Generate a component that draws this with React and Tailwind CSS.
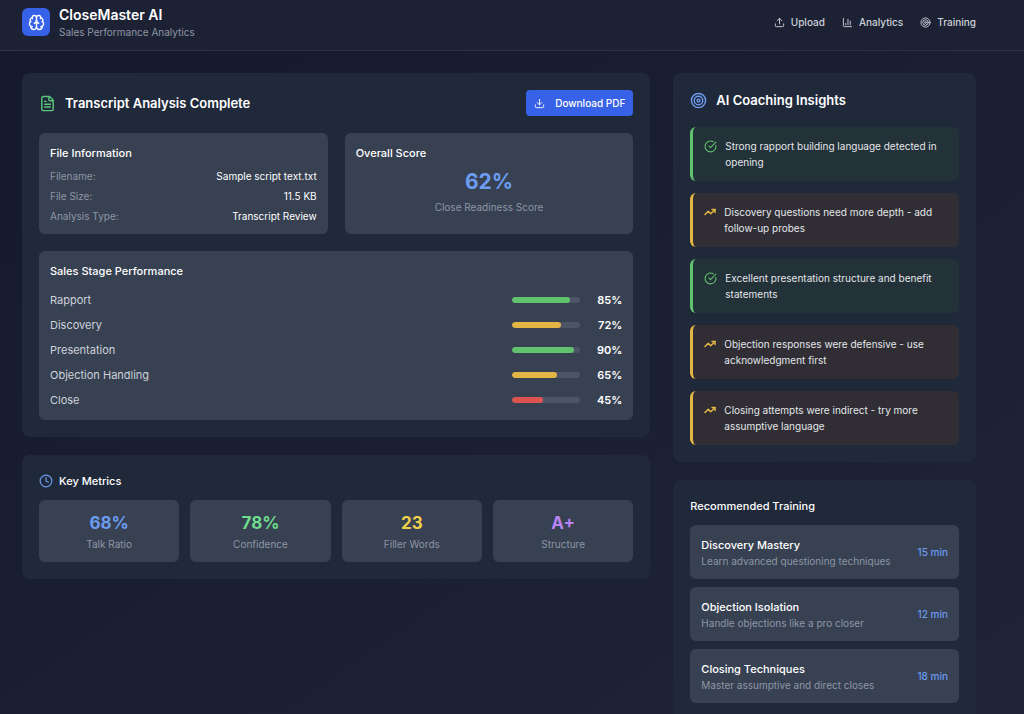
import {
  Brain,
  ChartColumn,
  CircleCheckBig,
  Clock,
  Download,
  FileText,
  Target,
  TrendingUp,
  Upload,
} from 'lucide-react'

const NAV_ITEMS = [
  { label: 'Upload', icon: Upload },
  { label: 'Analytics', icon: ChartColumn },
  { label: 'Training', icon: Target },
]

const FILE_INFO = [
  { label: 'Filename:', value: 'Sample script text.txt' },
  { label: 'File Size:', value: '11.5 KB' },
  { label: 'Analysis Type:', value: 'Transcript Review' },
]

const STAGES = [
  { name: 'Rapport', score: 85 },
  { name: 'Discovery', score: 72 },
  { name: 'Presentation', score: 90 },
  { name: 'Objection Handling', score: 65 },
  { name: 'Close', score: 45 },
]

const METRICS = [
  { value: '68%', label: 'Talk Ratio', color: 'text-[#6c9cf0]' },
  { value: '78%', label: 'Confidence', color: 'text-[#6fdc8c]' },
  { value: '23', label: 'Filler Words', color: 'text-[#f0cf4a]' },
  { value: 'A+', label: 'Structure', color: 'text-[#b584f2]' },
]

const INSIGHTS = [
  { type: 'strength', text: 'Strong rapport building language detected in opening' },
  { type: 'improve', text: 'Discovery questions need more depth - add follow-up probes' },
  { type: 'strength', text: 'Excellent presentation structure and benefit statements' },
  { type: 'improve', text: 'Objection responses were defensive - use acknowledgment first' },
  { type: 'improve', text: 'Closing attempts were indirect - try more assumptive language' },
]

const TRAINING = [
  { title: 'Discovery Mastery', desc: 'Learn advanced questioning techniques', time: '15 min' },
  { title: 'Objection Isolation', desc: 'Handle objections like a pro closer', time: '12 min' },
  { title: 'Closing Techniques', desc: 'Master assumptive and direct closes', time: '18 min' },
]

function barColor(score) {
  if (score >= 80) return 'bg-[#60c26c]'
  if (score >= 60) return 'bg-[#e2b545]'
  return 'bg-[#dc5350]'
}

function Card({ children }) {
  return <section className="rounded-lg bg-[#20293a] p-[17px]">{children}</section>
}

function Header() {
  return (
    <header className="flex items-center justify-between border-b border-[#2b3345] bg-[#1c2234] pt-[5px] pr-12 pb-[11px] pl-[22px]">
      <div className="flex items-center gap-[9px]">
        <div className="flex size-7 items-center justify-center rounded-md bg-[#3761e6]">
          <Brain size={17} className="text-white" />
        </div>
        <div>
          <h1 className="text-[14px] leading-5 font-semibold text-white">CloseMaster AI</h1>
          <p className="text-[10px] leading-[14px] text-[#8e96a5]">Sales Performance Analytics</p>
        </div>
      </div>
      <nav className="flex items-center gap-[17px]">
        {NAV_ITEMS.map(({ label, icon: Icon }) => (
          <a
            key={label}
            href="#"
            className="flex items-center gap-[6px] text-[10px] leading-[14px] font-medium text-[#cdd2da]"
          >
            <Icon size={11} />
            {label}
          </a>
        ))}
      </nav>
    </header>
  )
}

function StageRow({ name, score }) {
  return (
    <li className="flex items-center justify-between leading-[18px]">
      <span className="text-[11px] text-[#cdd2da]">{name}</span>
      <div className="flex items-center gap-[8px]">
        <div className="h-[6px] w-[68px] overflow-hidden rounded-full bg-[#4b5565]">
          <div
            className={`h-full rounded-full ${barColor(score)}`}
            style={{ width: `${score}%` }}
          />
        </div>
        <span className="w-[34px] text-right text-[11px] font-semibold text-white">{score}%</span>
      </div>
    </li>
  )
}

function AnalysisCard() {
  return (
    <Card>
      <div className="mb-[17px] flex items-center justify-between">
        <h2 className="flex items-center gap-[9px] text-[13px] leading-5 font-semibold text-white">
          <FileText size={17} className="text-[#5cc57a]" />
          Transcript Analysis Complete
        </h2>
        <button
          type="button"
          className="flex h-[26px] items-center gap-[10px] rounded bg-[#3761e6] px-[8px] text-[10px] font-medium text-white"
        >
          <Download size={11} />
          Download PDF
        </button>
      </div>

      <div className="mb-[17px] grid grid-cols-2 gap-[17px]">
        <div className="rounded-md bg-[#374152] p-[11px]">
          <h3 className="mb-[7px] text-[11px] leading-[18px] font-medium text-white">
            File Information
          </h3>
          <dl className="flex flex-col gap-[6px] text-[10px] leading-[14px]">
            {FILE_INFO.map((row) => (
              <div key={row.label} className="flex justify-between">
                <dt className="text-[#8e96a5]">{row.label}</dt>
                <dd className="text-white">{row.value}</dd>
              </div>
            ))}
          </dl>
        </div>
        <div className="rounded-md bg-[#374152] p-[11px]">
          <h3 className="mb-[7px] text-[11px] leading-[18px] font-medium text-white">
            Overall Score
          </h3>
          <div className="text-center">
            <div className="mb-[5px] text-[21px] leading-[26px] font-bold text-[#6c9cf0]">62%</div>
            <div className="text-[10px] leading-[14px] text-[#8e96a5]">Close Readiness Score</div>
          </div>
        </div>
      </div>

      <div className="rounded-md bg-[#374152] p-[11px]">
        <h3 className="mb-[11px] text-[11px] leading-[18px] font-medium text-white">
          Sales Stage Performance
        </h3>
        <ul className="flex flex-col gap-[7px]">
          {STAGES.map((stage) => (
            <StageRow key={stage.name} {...stage} />
          ))}
        </ul>
      </div>
    </Card>
  )
}

function MetricsCard() {
  return (
    <Card>
      <h3 className="mb-[10px] flex items-center gap-[6px] text-[11px] leading-[18px] font-medium text-white">
        <Clock size={14} className="text-[#6c9cf0]" />
        Key Metrics
      </h3>
      <div className="grid grid-cols-4 gap-[11px]">
        {METRICS.map((metric) => (
          <div key={metric.label} className="rounded-md bg-[#374152] p-[11px] text-center">
            <div className={`mb-[2px] text-[17px] leading-6 font-bold ${metric.color}`}>
              {metric.value}
            </div>
            <div className="text-[10px] leading-[14px] text-[#8e96a5]">{metric.label}</div>
          </div>
        ))}
      </div>
    </Card>
  )
}

function Insight({ type, text }) {
  const isStrength = type === 'strength'

  return (
    <li
      className={`flex items-start gap-[8px] rounded-md border-l-[3px] p-[11px] ${
        isStrength ? 'border-[#60c26c] bg-[#233138]' : 'border-[#e2b545] bg-[#302e34]'
      }`}
    >
      {isStrength ? (
        <CircleCheckBig size={13} className="mt-[2px] shrink-0 text-[#60c26c]" />
      ) : (
        <TrendingUp size={12} strokeWidth={3} className="mt-[2px] shrink-0 text-[#e2b545]" />
      )}
      <p className="text-[10px] leading-4 text-[#e3e6ea]">{text}</p>
    </li>
  )
}

function InsightsCard() {
  return (
    <Card>
      <h2 className="mb-[17px] flex items-center gap-[9px] text-[13px] leading-5 font-semibold text-white">
        <Target size={17} className="text-[#6c9cf0]" />
        AI Coaching Insights
      </h2>
      <ul className="flex flex-col gap-[12px]">
        {INSIGHTS.map((insight) => (
          <Insight key={insight.text} {...insight} />
        ))}
      </ul>
    </Card>
  )
}

function TrainingCard() {
  return (
    <Card>
      <h3 className="mb-[10px] text-[11px] leading-[18px] font-medium text-white">
        Recommended Training
      </h3>
      <ul className="flex flex-col gap-[8px]">
        {TRAINING.map((item) => (
          <li
            key={item.title}
            className="flex items-center justify-between rounded-md bg-[#374152] p-[11px]"
          >
            <div>
              <div className="text-[11px] leading-[18px] font-medium text-white">{item.title}</div>
              <div className="text-[10px] leading-[14px] text-[#8e96a5]">{item.desc}</div>
            </div>
            <span className="shrink-0 text-[10px] font-medium text-[#6c9cf0]">{item.time}</span>
          </li>
        ))}
      </ul>
    </Card>
  )
}

export default function App() {
  return (
    <div className="min-h-screen bg-linear-to-br from-[#14192b] to-[#202438] font-['Inter',sans-serif]">
      <Header />
      <main className="grid grid-cols-3 items-start gap-[23px] pt-[22px] pr-12 pl-[22px]">
        <div className="col-span-2 flex flex-col gap-[18px]">
          <AnalysisCard />
          <MetricsCard />
        </div>
        <div className="flex flex-col gap-[18px]">
          <InsightsCard />
          <TrainingCard />
        </div>
      </main>
    </div>
  )
}
